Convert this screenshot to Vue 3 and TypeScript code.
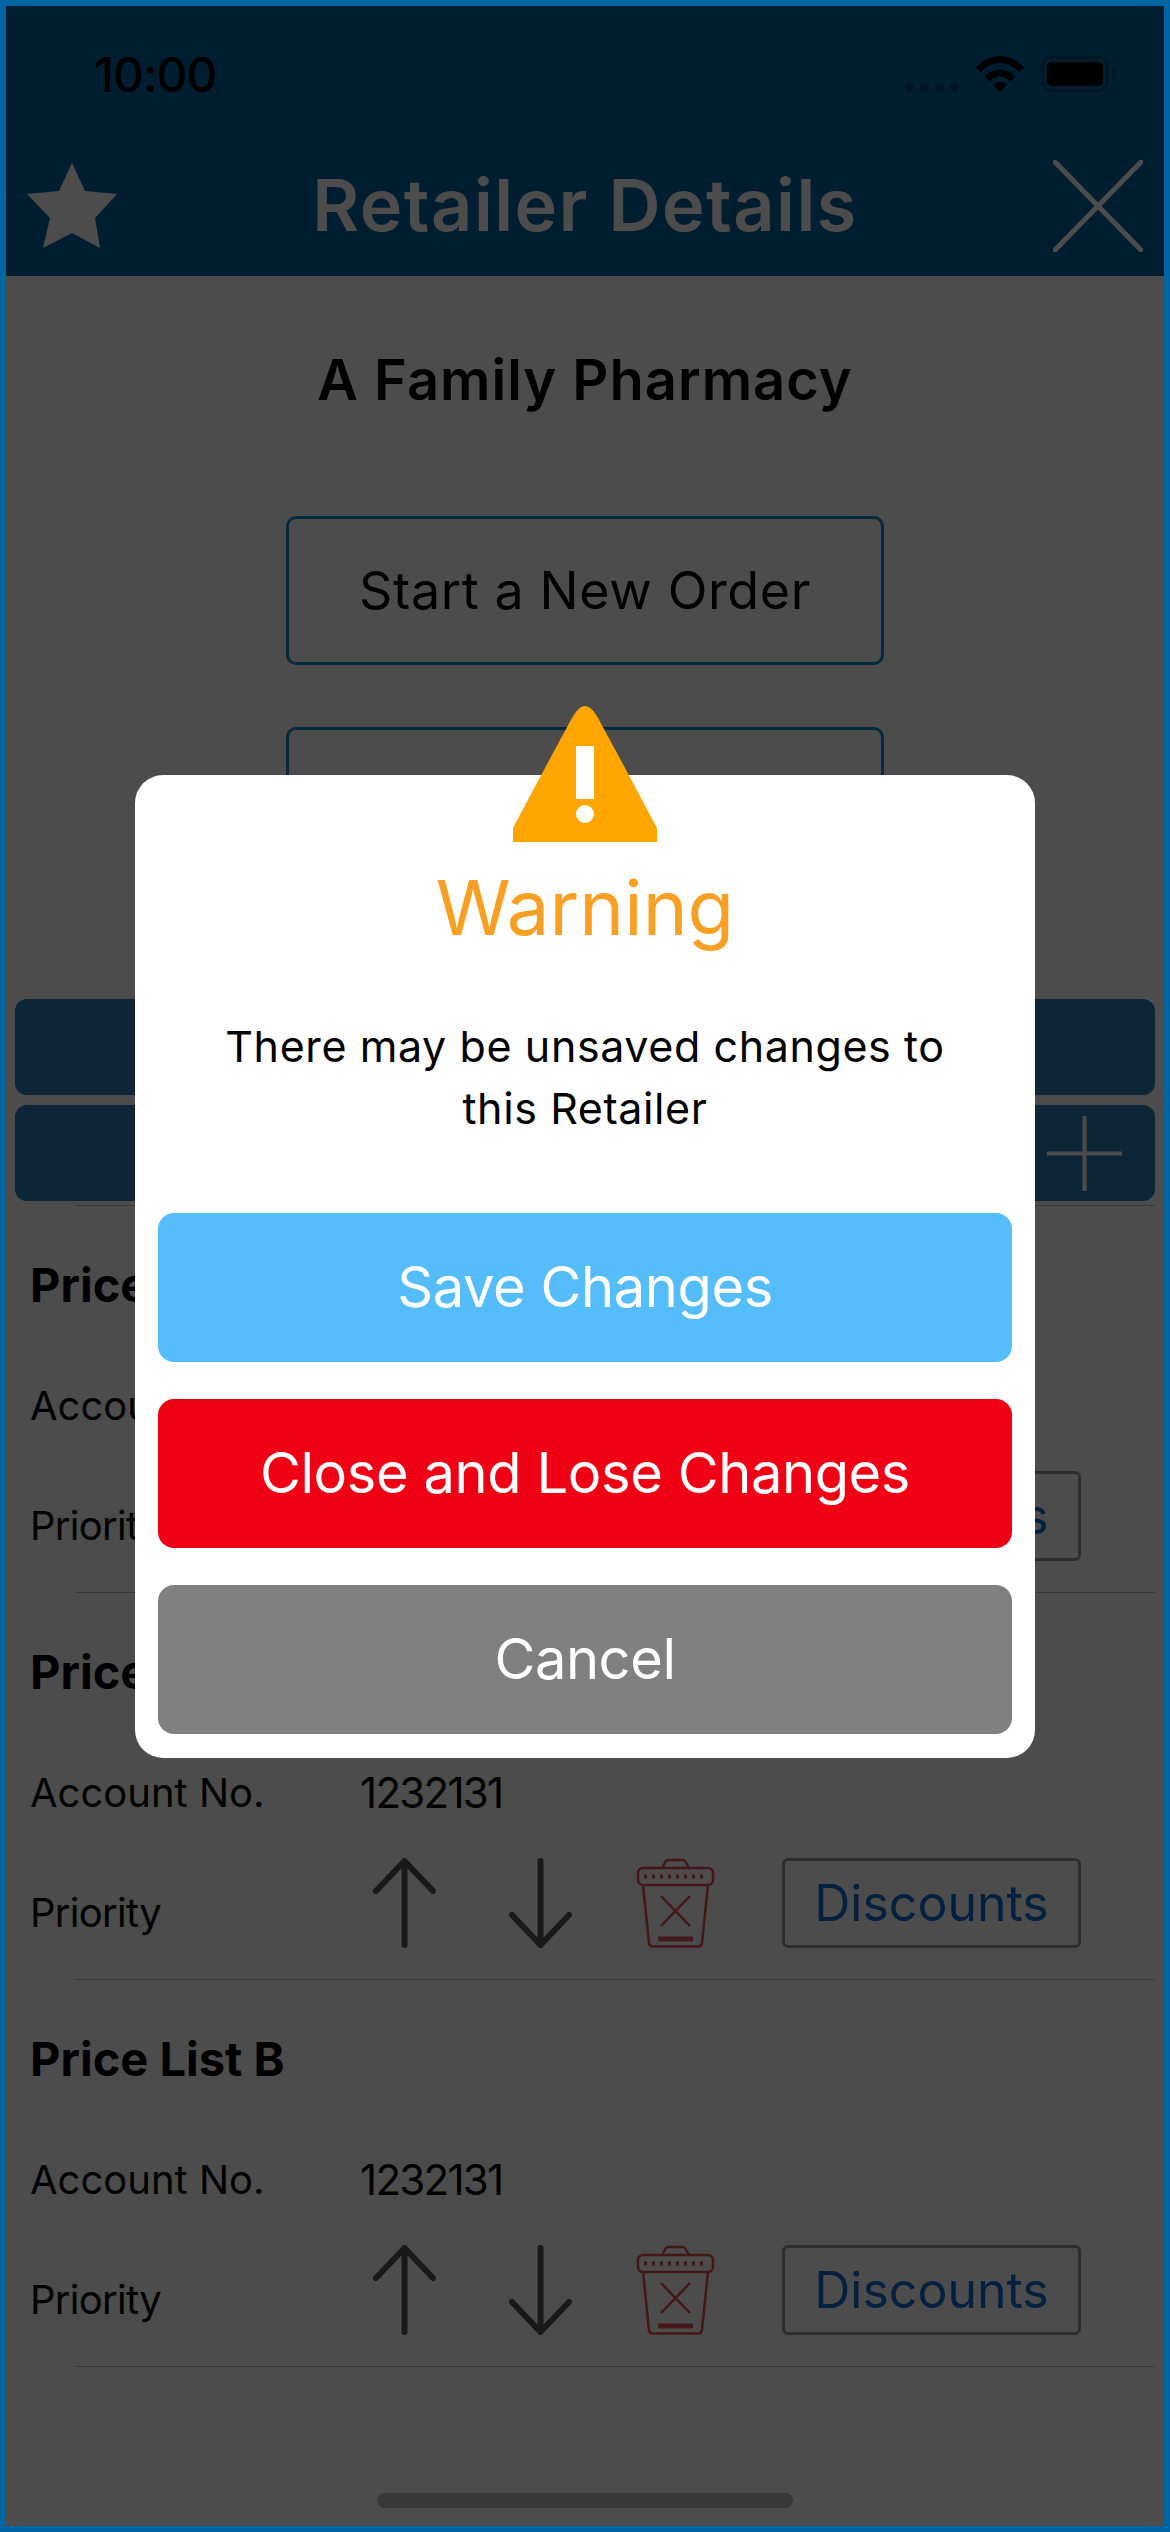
<template>
  <div class="frame">
    <header class="top">
      <div class="status">
        <span class="time">10:00</span>
        <div class="status-icons">
          <div class="dots"><i></i><i></i><i></i><i></i></div>
          <svg class="wifi" viewBox="0 0 48 36" fill="#000">
            <path d="M0 11.500C6.500 4.200 15 0 24 0s17.500 4.200 24 11.500l-4.700 5C38 10.500 31.300 7 24 7S10 10.500 4.700 16.500z" />
            <path d="M9 20.500C13 16.200 18.300 13.500 24 13.500s11 2.700 15 7l-4.700 5C31.500 22.500 27.900 20.500 24 20.500s-7.500 2-10.300 5z" />
            <path d="M17 29c1.800-2 4.300-3.300 7-3.300s5.200 1.300 7 3.300l-7 7z" />
          </svg>
          <div class="battery"><span class="battery-fill"></span></div>
          <span class="battery-nub"></span>
        </div>
      </div>
      <div class="nav">
        <svg class="star" viewBox="0 0 90 86" fill="#fff">
          <path d="M45 0L58 28 90 31 68 55 73 85 45 70 16 85 23 55 0 31 32 28z" />
        </svg>
        <h1 class="title">Retailer Details</h1>
        <svg class="close" viewBox="0 0 90 92" stroke="#fff" stroke-width="5" stroke-linecap="round">
          <path d="M2 2l86 88M88 2L2 90" />
        </svg>
      </div>
    </header>

    <main class="content">
      <h2 class="name">A Family Pharmacy</h2>
      <button class="outline first">Start a New Order</button>
      <button class="outline second"></button>
      <div class="bar bar-one"></div>
      <div class="bar bar-two">
        <svg class="plus" viewBox="0 0 75 75" stroke="#fff" stroke-width="4">
          <path d="M37.500 0v75M0 37.500h75" />
        </svg>
      </div>
      <div class="rule top-rule"></div>

      <section v-for="list in priceLists" :key="list.id" class="price-list">
        <h3 class="list-name">{{ list.name }}</h3>
        <div class="account">
          <span class="label">Account No.</span>
          <span class="value">{{ list.account }}</span>
        </div>
        <div class="priority">
          <span class="label priority-label">Priority</span>
          <svg class="arrow up" viewBox="0 0 63 90" fill="none" stroke="#555" stroke-width="6" stroke-linecap="round" stroke-linejoin="round">
            <path d="M31.500 3v84M3 33L31.500 3 60 33" />
          </svg>
          <svg class="arrow down" viewBox="0 0 63 90" fill="none" stroke="#555" stroke-width="6" stroke-linecap="round" stroke-linejoin="round">
            <path d="M31.500 3v84M3 57l28.500 30L60 57" />
          </svg>
          <svg class="trash" viewBox="0 0 79 90" fill="none" stroke="#e85050" stroke-width="2.500">
            <path d="M26 10l4-7a3 3 0 0 1 2-1h15a3 3 0 0 1 2 1l4 7" />
            <rect x="2" y="10" width="75" height="17" rx="5" />
            <path d="M8 18.500h63" stroke-width="4" stroke-dasharray="3 5" />
            <path d="M7 27l6 58a4 4 0 0 0 4 3.500h45a4 4 0 0 0 4-3.500l6-58" />
            <path d="M25 38l29 30M54 38L25 68" />
            <path d="M22 81h35" stroke-width="5" />
          </svg>
          <button class="discounts">Discounts</button>
        </div>
        <div class="rule"></div>
      </section>
    </main>

    <div class="home-bar"></div>

    <div class="overlay">
      <div class="dialog">
        <svg class="warn-icon" viewBox="0 0 144 136">
          <path d="M72 0c5 0 9 5 13 12 12 22 40 74 59 110v14H0v-14C19 86 47 34 59 12 63 5 67 0 72 0z" fill="#ffa500" />
          <rect x="63" y="40" width="18" height="53" fill="#fff" />
          <circle cx="72" cy="108" r="9" fill="#fff" />
        </svg>
        <h2 class="warn-title">Warning</h2>
        <p class="warn-text">There may be unsaved changes to this Retailer</p>
        <div class="actions">
          <button v-for="action in actions" :key="action.label" class="action" :class="action.kind">
            {{ action.label }}
          </button>
        </div>
      </div>
    </div>
  </div>
</template>

<script setup lang="ts">
interface PriceList {
  id: number;
  name: string;
  account: string;
}

const priceLists: PriceList[] = [
  { id: 1, name: 'Price List A', account: '1232131' },
  { id: 2, name: 'Price List A', account: '1232131' },
  { id: 3, name: 'Price List B', account: '1232131' },
];

const actions = [
  { label: 'Save Changes', kind: 'save' },
  { label: 'Close and Lose Changes', kind: 'lose' },
  { label: 'Cancel', kind: 'cancel' },
];
</script>

<style>
html,
body {
  margin: 0;
  background: #4d4d4d;
}
</style>

<style scoped>
.frame {
  position: relative;
  box-sizing: border-box;
  width: 1170px;
  height: 2532px;
  border: 6px solid #0066a3;
  background: #fff;
  overflow: hidden;
  font-family: Inter, "Liberation Sans", sans-serif;
  color: #000;
}

.top {
  height: 270px;
  background: #0067a2;
}

.status {
  box-sizing: border-box;
  height: 130px;
  padding: 6px 48px 0 88px;
  display: flex;
  align-items: center;
  justify-content: space-between;
}

.time {
  font-size: 48px;
  font-weight: 500;
  letter-spacing: -1px;
}

.status-icons {
  display: flex;
  align-items: center;
}

.dots {
  display: flex;
  gap: 6px;
  margin: 26px 17px 0 0;
}

.dots i {
  width: 9px;
  height: 9px;
  border-radius: 50%;
  background: #00466e;
}

.wifi {
  width: 48px;
  height: 36px;
  margin-right: 17px;
}

.battery {
  box-sizing: border-box;
  width: 68px;
  height: 36px;
  padding: 3px;
  border: 3px solid #004a78;
  border-radius: 10px;
}

.battery-fill {
  display: block;
  height: 100%;
  background: #000;
  border-radius: 5px;
}

.battery-nub {
  width: 4px;
  height: 12px;
  margin-left: 3px;
  background: #004a78;
  border-radius: 0 4px 4px 0;
}

.nav {
  height: 140px;
  padding: 0 21px;
  display: flex;
  align-items: center;
  justify-content: space-between;
}

.star {
  width: 90px;
  height: 86px;
}

.close {
  width: 90px;
  height: 92px;
}

.title {
  margin: 0 0 4px;
  font-size: 72px;
  font-weight: 600;
  color: #fff;
  letter-spacing: 1.500px;
}

.content {
  display: flex;
  flex-direction: column;
}

.name {
  margin: 64px 0 0;
  height: 80px;
  line-height: 80px;
  text-align: center;
  font-size: 56px;
  font-weight: 600;
  letter-spacing: 1px;
}

.outline {
  box-sizing: border-box;
  align-self: center;
  width: 598px;
  height: 149px;
  padding: 0;
  background: transparent;
  border: 3px solid #0c8fd0;
  border-radius: 10px;
  font-family: inherit;
  font-size: 52px;
  letter-spacing: 0.600px;
  color: #000;
}

.first {
  margin-top: 96px;
}

.second {
  margin-top: 62px;
}

.bar {
  box-sizing: border-box;
  height: 96px;
  margin: 0 9px;
  background: #2a80b8;
  border-radius: 12px;
}

.bar-one {
  margin-top: 123px;
}

.bar-two {
  margin-top: 10px;
  padding-right: 33px;
  display: flex;
  align-items: center;
  justify-content: flex-end;
}

.plus {
  width: 75px;
  height: 75px;
}

.rule {
  height: 1px;
  margin: 0 9px 0 69px;
  background: #bdbdbd;
}

.top-rule {
  margin-top: 4px;
}

.price-list {
  display: flex;
  flex-direction: column;
}

.list-name {
  margin: 49px 0 0 24px;
  height: 60px;
  line-height: 60px;
  font-size: 47px;
  font-weight: 700;
}

.account,
.priority {
  display: flex;
  padding-left: 24px;
}

.account {
  margin-top: 60px;
  height: 60px;
  align-items: center;
}

.priority {
  margin-top: 36px;
  height: 90px;
  margin-bottom: 31px;
}

.label {
  width: 330px;
  font-size: 40px;
  flex-shrink: 0;
}

.priority-label {
  align-self: center;
  padding-top: 18px;
  letter-spacing: -0.700px;
}

.value {
  font-size: 42px;
  letter-spacing: -1.700px;
}

.arrow {
  width: 63px;
  height: 90px;
}

.up {
  margin-left: 13px;
}

.down {
  margin-left: 73px;
}

.trash {
  width: 79px;
  height: 90px;
  margin-left: 64px;
}

.discounts {
  box-sizing: border-box;
  width: 299px;
  height: 90px;
  margin-left: 67px;
  padding: 0;
  background: transparent;
  border: 3px solid #999;
  border-radius: 6px;
  font-family: inherit;
  font-size: 50px;
  color: #0a6ed1;
}

.home-bar {
  position: absolute;
  left: 371px;
  bottom: 18px;
  width: 416px;
  height: 15px;
  background: #c0c0c0;
  border-radius: 8px;
}

.overlay {
  position: absolute;
  inset: 0;
  display: flex;
  align-items: center;
  justify-content: center;
  background: rgba(0, 0, 0, 0.7);
}

.dialog {
  position: relative;
  box-sizing: border-box;
  width: 900px;
  height: 983px;
  padding: 87px 23px 23px;
  background: #fff;
  border-radius: 28px;
}

.warn-icon {
  position: absolute;
  left: 378px;
  top: -69px;
  width: 144px;
  height: 136px;
}

.warn-title {
  margin: 0;
  height: 90px;
  line-height: 90px;
  text-align: center;
  font-size: 76px;
  font-weight: 400;
  color: #f9a024;
}

.warn-text {
  margin: 63px 40px 0;
  line-height: 62px;
  text-align: center;
  font-size: 43px;
  letter-spacing: 0.600px;
}

.actions {
  margin-top: 74px;
  display: flex;
  flex-direction: column;
  gap: 37px;
}

.action {
  height: 149px;
  padding: 0;
  border: 0;
  border-radius: 16px;
  font-family: inherit;
  font-size: 56px;
  letter-spacing: -0.400px;
  color: #fff;
}

.save {
  background: #56bdfd;
}

.lose {
  background: #ef0014;
}

.cancel {
  background: #808080;
}
</style>
